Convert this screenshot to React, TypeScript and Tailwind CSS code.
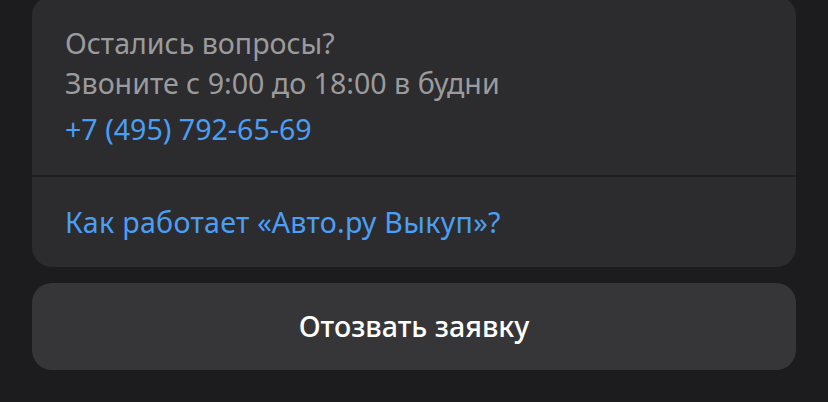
import React from 'react'

const App = () => {
  return (
    <div
      className="w-[828px] h-[402px] overflow-hidden bg-[#1c1c1e] px-8"
      style={{ fontFamily: '"Noto Sans", "Open Sans", sans-serif' }}
    >
      <section className="rounded-b-[20px] rounded-t-[20px] bg-[#2c2c2e] -mt-1">
        <div className="px-[33px] pt-[27px] pb-[26px]">
          <p className="text-[28.6px] leading-[40px] text-[#9b9b9d]">
            Остались вопросы?
            <br />
            Звоните с 9:00 до 18:00 в будни
          </p>
          <a className="mt-[6px] block text-[28.6px] leading-[40px] text-[#4a9ff5]">
            +7 (495) 792-65-69
          </a>
        </div>
        <div className="h-[2px] bg-[#1f1f21]" />
        <div className="px-[33px] pt-[25px] pb-[25px]">
          <a className="block text-[28.6px] leading-[40px] tracking-[0.01em] text-[#4a9ff5]">
            Как работает «Авто.ру Выкуп»?
          </a>
        </div>
      </section>
      <button className="mt-4 h-[87px] w-full rounded-[20px] bg-[#363638] text-[28.6px] font-medium text-white">
        Отозвать заявку
      </button>
    </div>
  )
}

export default App
